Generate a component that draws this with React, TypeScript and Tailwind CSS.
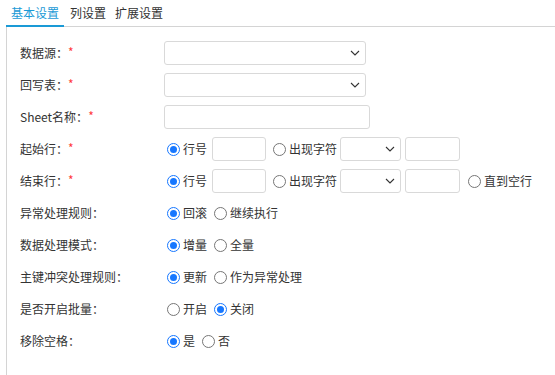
import React from "react";

const Chevron = () => (
  <svg width="10" height="6" viewBox="0 0 10 6" className="absolute right-[5px] top-1/2 -translate-y-1/2">
    <path d="M1 1 L5 5 L9 1" fill="none" stroke="#333" strokeWidth="1.1" />
  </svg>
);

const SelectWide = () => (
  <div className="relative h-[24px] w-[202px] border border-[#d9d9d9] rounded-[3px] bg-white">
    <Chevron />
  </div>
);

const SelectSmall = () => (
  <div className="relative h-[24px] w-[61px] border border-[#d9d9d9] rounded-[3px] bg-white">
    <Chevron />
  </div>
);

const Box = ({ w }: { w: number }) => (
  <div className="h-[24px] border border-[#d9d9d9] rounded-[3px] bg-white" style={{ width: w }} />
);

const Radio = ({ checked, label }: { checked?: boolean; label: string }) => (
  <label className="flex items-center">
    <span
      className={
        checked
          ? "w-[13px] h-[13px] rounded-full border border-[#1677ff] flex items-center justify-center"
          : "w-[13px] h-[13px] rounded-full border border-[#767676]"
      }
    >
      {checked && <span className="w-[7px] h-[7px] rounded-full bg-[#1677ff]" />}
    </span>
    <span className="ml-[3px]">{label}</span>
  </label>
);

const Row = ({ label, req, children }: { label: string; req?: boolean; children?: React.ReactNode }) => (
  <div className="flex items-center h-[32px]">
    <div className="w-[144px] flex items-center">
      <span>{label}</span>
      {req && <span className="text-[#ff3b3b] -mt-[3px]">*</span>}
    </div>
    <div className="flex items-center">{children}</div>
  </div>
);

export default function App() {
  return (
    <div
      className="w-[555px] h-[375px] bg-white text-[12px] text-[#333] overflow-hidden"
      style={{ fontFamily: '"Noto Sans CJK SC", "Noto Sans", sans-serif' }}
    >
      <div className="flex h-[27px] border-b border-[#d4d4d4] ml-[6px] items-end">
        <div className="relative h-[27px] w-[58px] flex items-center justify-center text-[#1a9ad6]">
          基本设置
          <div className="absolute left-0 right-0 bottom-[-1px] h-[2px] bg-[#1a9ad6]" />
        </div>
        <div className="h-[27px] flex items-center ml-[6px]">列设置</div>
        <div className="h-[27px] flex items-center ml-[9px]">扩展设置</div>
      </div>
      <div className="ml-[6px] border-l border-[#d4d4d4] h-[348px] pl-[13px] pt-[10px]">
        <Row label="数据源：" req>
          <SelectWide />
        </Row>
        <Row label="回写表：" req>
          <SelectWide />
        </Row>
        <Row label="Sheet名称：" req>
          <Box w={206} />
        </Row>
        <Row label="起始行：" req>
          <div className="ml-[3px] flex items-center">
            <Radio checked label="行号" />
            <div className="ml-[5px]"><Box w={54} /></div>
            <div className="ml-[7px]"><Radio label="出现字符" /></div>
            <div className="ml-[3px]"><SelectSmall /></div>
            <div className="ml-[4px]"><Box w={55} /></div>
          </div>
        </Row>
        <Row label="结束行：" req>
          <div className="ml-[3px] flex items-center">
            <Radio checked label="行号" />
            <div className="ml-[5px]"><Box w={54} /></div>
            <div className="ml-[7px]"><Radio label="出现字符" /></div>
            <div className="ml-[3px]"><SelectSmall /></div>
            <div className="ml-[4px]"><Box w={55} /></div>
            <div className="ml-[8px]"><Radio label="直到空行" /></div>
          </div>
        </Row>
        <Row label="异常处理规则：">
          <div className="ml-[3px] flex items-center gap-[7px]">
            <Radio checked label="回滚" />
            <Radio label="继续执行" />
          </div>
        </Row>
        <Row label="数据处理模式：">
          <div className="ml-[3px] flex items-center gap-[7px]">
            <Radio checked label="增量" />
            <Radio label="全量" />
          </div>
        </Row>
        <Row label="主键冲突处理规则：">
          <div className="ml-[3px] flex items-center gap-[7px]">
            <Radio checked label="更新" />
            <Radio label="作为异常处理" />
          </div>
        </Row>
        <Row label="是否开启批量：">
          <div className="ml-[3px] flex items-center gap-[7px]">
            <Radio label="开启" />
            <Radio checked label="关闭" />
          </div>
        </Row>
        <Row label="移除空格：">
          <div className="ml-[3px] flex items-center gap-[7px]">
            <Radio checked label="是" />
            <Radio label="否" />
          </div>
        </Row>
      </div>
    </div>
  );
}
